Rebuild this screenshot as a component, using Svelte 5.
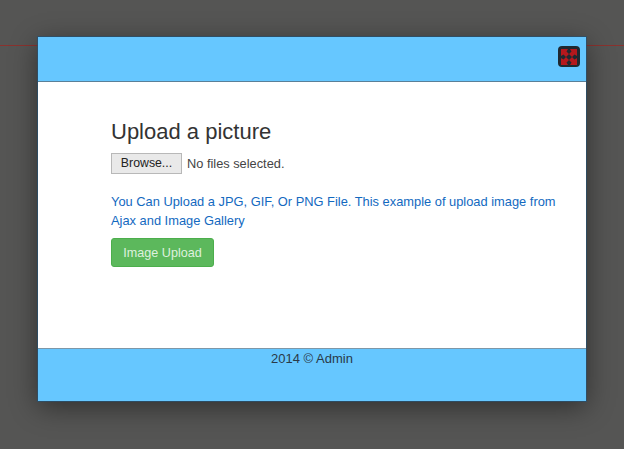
<script>
	let fileLabel = 'No files selected.';
</script>

<div class="page">
	<div class="navline"></div>
	<div class="modal">
		<header class="head">
			<button type="button" class="close" aria-label="Close">
				<svg viewBox="0 0 20 20" width="20" height="20">
					<g fill="#b5181d">
						<path d="M2 2h7L7.500 4.500 10 7l-3 3-2.500-2.500L2 9z" />
						<path d="M18 2v7l-2.500-1.500L13 10l-3-3 2.500-2.500L11 2z" />
						<path d="M2 18v-7l2.500 1.500L7 10l3 3-2.500 2.500L9 18z" />
						<path d="M18 18h-7l1.500-2.500L10 13l3-3 2.500 2.500L18 11z" />
					</g>
				</svg>
			</button>
		</header>
		<main class="body">
			<h3>Upload a picture</h3>
			<div class="file">
				<button type="button" class="browse">Browse...</button>
				<span>{fileLabel}</span>
			</div>
			<p class="note">You Can Upload a JPG, GIF, Or PNG File. This example of upload image from Ajax and Image Gallery</p>
			<button type="button" class="upload">Image Upload</button>
		</main>
		<footer class="foot">2014 © Admin</footer>
	</div>
</div>

<style>
	:global(body) {
		margin: 0;
		background: #555554;
	}
	.page {
		position: relative;
		height: 449px;
		overflow: hidden;
		padding: 37px 38px 0;
		box-sizing: border-box;
		font-family: "Liberation Sans", Arial, sans-serif;
		color: #333;
	}
	.navline {
		position: absolute;
		left: 0;
		right: 0;
		top: 45px;
		height: 1px;
		background: #8a322e;
	}
	.modal {
		position: relative;
		width: 548px;
		height: 364px;
		display: flex;
		flex-direction: column;
		background: #fff;
		box-shadow: 0 0 0 1px rgba(40, 80, 110, 0.75), 0 6px 26px rgba(0, 0, 0, 0.45);
	}
	.head {
		height: 45px;
		box-sizing: border-box;
		background: #66c7ff;
		border-bottom: 1px solid #5a8098;
		display: flex;
		justify-content: flex-end;
		padding: 9px 6px 0 0;
	}
	.close {
		width: 22px;
		height: 21px;
		padding: 0;
		border: none;
		border-radius: 4px;
		background: #1f2931;
		display: flex;
		align-items: center;
		justify-content: center;
	}
	.body {
		flex: 1;
		padding: 0 28px 0 73px;
	}
	h3 {
		margin: 37px 0 0;
		font-size: 22px;
		line-height: 25px;
		font-weight: 400;
		color: #333;
	}
	.file {
		margin-top: 8px;
		display: flex;
		align-items: center;
		gap: 5px;
		font-size: 12.800px;
		height: 22px;
		color: #444;
	}
	.browse {
		width: 71px;
		height: 21px;
		padding: 0;
		border: 1px solid #b8b8b8;
		background: #e9e9e9;
		color: #222;
		font: inherit;
		font-size: 12.300px;
	}
	.note {
		margin: 18px 0 0;
		font-size: 12.860px;
		line-height: 19px;
		color: #1369bf;
	}
	.upload {
		display: block;
		margin-top: 8px;
		width: 103px;
		height: 29px;
		padding: 0;
		border: 1px solid #4cae4c;
		border-radius: 3px;
		background: #5cb85c;
		color: #dff0df;
		font: inherit;
		font-size: 12.600px;
	}
	.foot {
		height: 53px;
		box-sizing: border-box;
		background: #66c7ff;
		border-top: 1px solid #7d97a8;
		text-align: center;
		font-size: 13px;
		line-height: 19px;
		color: #2a3a48;
	}
</style>
